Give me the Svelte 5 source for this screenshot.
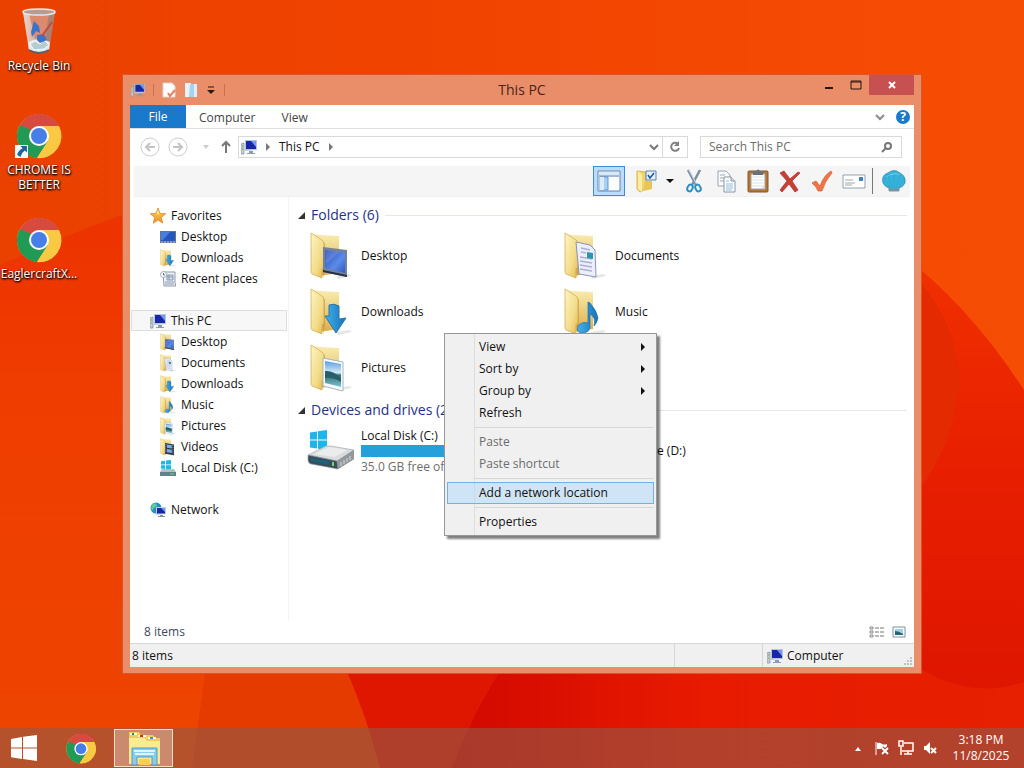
<script lang="ts">
  type TreeRow = { label: string; icon: string; root?: boolean; selected?: boolean };

  const favorites: TreeRow[] = [
    { label: 'Favorites', icon: 'star', root: true },
    { label: 'Desktop', icon: 'screen' },
    { label: 'Downloads', icon: 'folder-downloads' },
    { label: 'Recent places', icon: 'recent' }
  ];
  const computer: TreeRow[] = [
    { label: 'This PC', icon: 'pc', root: true, selected: true },
    { label: 'Desktop', icon: 'folder-desktop' },
    { label: 'Documents', icon: 'folder-documents' },
    { label: 'Downloads', icon: 'folder-downloads' },
    { label: 'Music', icon: 'folder-music' },
    { label: 'Pictures', icon: 'folder-pictures' },
    { label: 'Videos', icon: 'folder-videos' },
    { label: 'Local Disk (C:)', icon: 'disk' }
  ];
  const network: TreeRow[] = [{ label: 'Network', icon: 'network', root: true }];
  const groups = [favorites, computer, network];

  const folders = ['Desktop', 'Documents', 'Downloads', 'Music', 'Pictures', 'Videos'];

  const shortcuts = [
    { label: 'Recycle Bin', icon: 'bin', link: false },
    { label: 'CHROME IS BETTER', icon: 'chrome', link: true },
    { label: 'EaglercraftX...', icon: 'chrome', link: false }
  ];

  const tools = [
    { label: 'Cut', icon: 'cut' },
    { label: 'Copy', icon: 'copy' },
    { label: 'Paste', icon: 'paste' },
    { label: 'Delete', icon: 'delete' },
    { label: 'Rename', icon: 'check' },
    { label: 'Email', icon: 'mail' }
  ];

  const menu = [
    [
      { label: 'View', sub: true },
      { label: 'Sort by', sub: true },
      { label: 'Group by', sub: true },
      { label: 'Refresh' }
    ],
    [
      { label: 'Paste', disabled: true },
      { label: 'Paste shortcut', disabled: true }
    ],
    [{ label: 'Add a network location', active: true }],
    [{ label: 'Properties' }]
  ];

  const diskUsed = 45;
</script>

{#snippet icon(name: string, size: number)}
  <svg class="icon" width={size} height={size} aria-hidden="true"><use href="#{name}" /></svg>
{/snippet}

<svg class="sprite" width="0" height="0" aria-hidden="true">
  <defs>
    <linearGradient id="flap" x1="0" y1="0" x2="1" y2="1">
      <stop offset="0" stop-color="#fdf5c4" />
      <stop offset="0.6" stop-color="#f3dc8a" />
      <stop offset="1" stop-color="#e3b94e" />
    </linearGradient>
    <linearGradient id="back" x1="0" y1="0" x2="0" y2="1">
      <stop offset="0" stop-color="#f8ecae" />
      <stop offset="1" stop-color="#dcae4c" />
    </linearGradient>
    <linearGradient id="blue" x1="0" y1="0" x2="1" y2="1">
      <stop offset="0" stop-color="#2448b8" />
      <stop offset="0.6" stop-color="#5c8ceb" />
      <stop offset="1" stop-color="#2c58c0" />
    </linearGradient>
    <linearGradient id="arrow" x1="0" y1="0" x2="1" y2="0">
      <stop offset="0" stop-color="#45b0ea" />
      <stop offset="1" stop-color="#1272b8" />
    </linearGradient>
    <linearGradient id="photo" x1="0" y1="0" x2="0" y2="1">
      <stop offset="0" stop-color="#5a9be0" />
      <stop offset="0.45" stop-color="#d5ecf5" />
      <stop offset="0.55" stop-color="#33706c" />
      <stop offset="1" stop-color="#7cc4d4" />
    </linearGradient>
    <linearGradient id="metal" x1="0" y1="0" x2="1" y2="0">
      <stop offset="0" stop-color="#d8d8d8" />
      <stop offset="0.5" stop-color="#f4ece8" stop-opacity="0.5" />
      <stop offset="1" stop-color="#8f8f8f" />
    </linearGradient>
    <linearGradient id="gold" x1="0" y1="0" x2="0" y2="1">
      <stop offset="0" stop-color="#ffd85a" />
      <stop offset="1" stop-color="#f08c1a" />
    </linearGradient>
  </defs>

  <symbol id="folder" viewBox="0 0 48 48">
    <path d="M30 44l12-2 3 2-14 3z" fill="#999" opacity="0.25" />
    <path d="M5 2l9 1 18 1v37L12 44z" fill="url(#back)" />
    <path d="M15 8l3 4v26l-2 8z" fill="#b98a35" opacity="0.5" />
    <path d="M4 1l11 7q2 1 2 4v23l-2 2v9L5 42q-1-1-1-3z" fill="url(#flap)" stroke="#cfa84a" stroke-width="0.7" />
  </symbol>
  <symbol id="folder-desktop" viewBox="0 0 48 48">
    <use href="#folder" />
    <path d="M16 15l24 3v27l-24-5z" fill="#72829a" />
    <path d="M18 18l20 3v20l-20-5z" fill="url(#blue)" />
    <path d="M18 18l14 2-13 12z" fill="#fff" opacity="0.15" />
    <path d="M16 38l24 5v2l-24-5z" fill="#25303e" />
  </symbol>
  <symbol id="folder-documents" viewBox="0 0 48 48">
    <use href="#folder" />
    <path d="M15 10l14 3 5 5 1 27-17-3z" fill="#eceefa" stroke="#8c93b4" />
    <path d="M20 16l9 2M20 20l5 1M19 25l12 2M19 29l12 2M19 33l12 2M19 37l12 2" stroke="#a9b1d4" stroke-width="1.3" />
    <path d="M26 20l6 1v6l-6-1z" fill="#2d96aa" />
  </symbol>
  <symbol id="folder-downloads" viewBox="0 0 48 48">
    <use href="#folder" />
    <path d="M22 17q5-2 10 1v13l7-1-10 15-11-17h4z" fill="url(#arrow)" stroke="#2f75a3" />
  </symbol>
  <symbol id="folder-music" viewBox="0 0 48 48">
    <use href="#folder" />
    <path d="M27 14l2 1q7 8 8 15-1 5-4 8 2-9-4-12v14q-1 5-9 5-5-1-3-7 4-5 10-3z" fill="url(#arrow)" stroke="#256caa" stroke-width="0.7" />
  </symbol>
  <symbol id="folder-pictures" viewBox="0 0 48 48">
    <use href="#folder" />
    <path d="M16 14l20 4v29l-20-5z" fill="#f5fbff" stroke="#a7b6c0" />
    <path d="M18 17l16 3v23l-16-4z" fill="url(#photo)" />
    <path d="M18 27q8-1 16 7v4q-8-5-16-4z" fill="#27606a" />
  </symbol>
  <symbol id="folder-videos" viewBox="0 0 48 48">
    <use href="#folder" />
    <path d="M16 13l24 4v29l-24-4z" fill="#2c3543" />
    <path d="M21 17l13 2v9l-13-2zM21 29l13 2v9l-13-2z" fill="#79aeea" />
    <path d="M18 16v25M37 19v24" stroke="#eee" stroke-width="2" stroke-dasharray="2 3" />
  </symbol>

  <symbol id="screen" viewBox="0 0 16 16">
    <path d="M0 2h16v12H0z" fill="#64748d" />
    <path d="M1 3h14v9H1z" fill="#2456bd" />
    <path d="M1 3h9L3 11H1z" fill="#477edb" />
    <path d="M1 13h14" stroke="#a8c7ef" stroke-dasharray="2 1" />
  </symbol>
  <symbol id="star" viewBox="0 0 16 16">
    <path d="M8 0l2 5.4 5.8.3-4.5 3.7 1.5 5.8L8 12l-4.8 3.2 1.5-5.8L.2 5.7 6 5.4z" fill="url(#gold)" stroke="#d88a2a" stroke-width="0.8" />
    <path d="M8 2l1.2 4.3H6.6z" fill="#fff2b0" />
  </symbol>
  <symbol id="recent" viewBox="0 0 16 16">
    <path d="M3 1h12v11l1 3H4z" fill="#f1f3f6" stroke="#8c99aa" />
    <path d="M7 4h6v5H7zM5 11h9M5 13h9M9 4v5M7 6h6" fill="#d5e2ef" stroke="#8499b4" />
    <circle cx="3.5" cy="3.5" r="3" fill="#fff" stroke="#9baabb" />
    <path d="M3.5 2v2H5" fill="none" stroke="#5b6e86" />
  </symbol>
  <symbol id="pc" viewBox="0 0 16 16">
    <path d="M0 5l3-1v11H0z" fill="#c5ced6" stroke="#7f8d99" stroke-width="0.7" />
    <path d="M1 7h1M1 10h1" stroke="#57a457" />
    <path d="M4 1h12v10L4 12z" fill="#b7c5d9" />
    <path d="M5 2h10v8H5z" fill="#1826a8" />
    <path d="M10 2h5v6z" fill="#7697ef" />
    <path d="M8 12h4v2h2v1H6v-1h2z" fill="#8e9bad" />
  </symbol>
  <symbol id="disk" viewBox="0 0 16 16">
    <path d="M1 1.3l4-.6v3.7H1zM6 .6l5-.6v4.4H6zM1 5.3h4V9l-4-.6zM6 5.3h5v4.5L6 9.2z" fill="#1fb8e8" />
    <path d="M2 9h12l2 3H0z" fill="#b3bfc5" />
    <path d="M0 12h16v4H0z" fill="#64818b" />
    <path d="M10 14h4" stroke="#70d35d" />
  </symbol>
  <symbol id="network" viewBox="0 0 16 16">
    <circle cx="6" cy="6" r="5.5" fill="#2193bd" />
    <path d="M3 1q4 0 4 3L4 6 2 9Q0 5 3 1z" fill="#66c79a" />
    <path d="M6 5h10v7l-10 1z" fill="#c0cde0" />
    <path d="M7 6h8v5.5H7z" fill="#1826a8" />
    <path d="M11 6h4v4z" fill="#7697ef" />
    <path d="M10 13h3v1h2v1H8v-1h2z" fill="#8090a8" />
  </symbol>

  <symbol id="drive" viewBox="0 0 48 48">
    <path d="M3 5.5l7-1v8H3zM11 4.3L20 3v9.5h-9zM3 13.5h7v8l-7-1zM11 13.5h9V23l-9-1.3z" fill="#1cb6ea" />
    <path d="M2 29l18-10 27 4v9L31 42 2 36z" fill="#70767a" />
    <path d="M1 28l18-9h5l23 4-17 11z" fill="#d9dcde" stroke="#a5aaad" stroke-width="0.6" />
    <path d="M7 27l15-7 18 3-12 7z" fill="#ebeded" />
    <path d="M30 34l17-11v9L31 42z" fill="#92989c" />
    <path d="M34 35v4m3-6v4m3-6v4m3-6v4" stroke="#dadddd" />
    <path d="M1 28l29 6 1 8-27-5q-3-1-3-4z" fill="#3d4c54" stroke="#91a4ad" stroke-width="0.7" />
    <path d="M4 31l18 3v4L4 34z" fill="#1b627d" />
    <path d="M26 35v4" stroke="#62dd65" stroke-width="2" />
  </symbol>
  <symbol id="disc" viewBox="0 0 48 48">
    <circle cx="24" cy="24" r="20" fill="#dfe4ea" stroke="#98a2ad" />
    <circle cx="24" cy="24" r="5" fill="#fff" stroke="#98a2ad" />
  </symbol>

  <symbol id="chrome" viewBox="0 0 48 48">
    <circle cx="24" cy="25" r="22" fill="#f8c33b" />
    <path d="M24 25L5 14a22 22 0 0 0 17 33l11-17z" fill="#219a55" />
    <path d="M5 14a22 22 0 0 1 39 1H24v10H12z" fill="#d64a40" />
    <path d="M5 14l9 16 10-5-8-6z" fill="#219a55" />
    <path d="M24 15h20a22 22 0 0 1-22 32l11-17z" fill="#fac943" />
    <circle cx="24" cy="25" r="10" fill="#fff" />
    <circle cx="24" cy="25" r="8" fill="#467fe8" />
  </symbol>
  <symbol id="bin" viewBox="0 0 48 48">
    <path d="M8 5l6 38q10 6 20 0l6-38z" fill="#d5a698" opacity="0.72" />
    <path d="M8 5l6 38q5 3 9 3L14 6z" fill="url(#metal)" />
    <path d="M34 7l-6 39q4-1 6-3l6-38z" fill="#777" opacity="0.5" />
    <path d="M13 35q11-6 22 0l-1 8q-10 5-20 0z" fill="#dfeaea" />
    <path d="M15 37l5-3 5 3 4-4 5 5-5 4-10 1z" fill="#b8cbcf" stroke="#f7fcfc" />
    <path d="M19 14l5 5 1 7-4-2-4 6-1-5zM22 28l7-1 3 6-7 3-3-3z" fill="#3973cd" />
    <path d="M27 29l10-14" stroke="#c44b37" stroke-width="2" />
    <ellipse cx="24" cy="5" rx="16" ry="3" fill="#b69b92" stroke="#e9e5e3" stroke-width="1.5" />
    <path d="M14 43q10 6 20 0" fill="none" stroke="#596166" stroke-width="2" />
  </symbol>
  <symbol id="explorer" viewBox="0 0 36 36">
    <path d="M3 2h10l2 3h12l2 3h5v26H3z" fill="#eccb61" />
    <path d="M4 3h7v2H4zM12 5h8v2h-8zM22 7h8v2h-8z" fill="#fff8dd" />
    <path d="M6 3h2v2H6z" fill="#298b42" />
    <path d="M14 5h3v2h-3z" fill="#c93322" />
    <path d="M24 7h3v2h-3z" fill="#3b8fd1" />
    <path d="M3 8h16l2 3h13v23H3z" fill="#f9eb91" />
    <path d="M6 18h25v17h-5v-8H11v8H6z" fill="#8acbea" stroke="#4c9fcb" />
    <path d="M8 21h21M9 24h19" stroke="#d9f5ff" stroke-width="2" />
    <path d="M13 29h11v6H13z" fill="#f6cf54" />
  </symbol>
  <symbol id="windows" viewBox="0 0 26 26">
    <path d="M0 4l11-2v10.5H0zM12 1.8L26 0v12.500H12zM0 13.5h11V24L0 22.300zM12 13.500h14V26l-14-2z" fill="#fff" />
  </symbol>

  <symbol id="panes" viewBox="0 0 24 24">
    <path d="M1 2h22v20H1z" fill="#fff" stroke="#5c84af" />
    <path d="M2 3h20v3H2z" fill="#d7e8f8" />
    <path d="M3 8h8v13H3z" fill="#a8d0f5" stroke="#5b98cf" />
    <path d="M3 8h4v13H3z" fill="#dcecfb" />
    <path d="M2 7h20" stroke="#4373aa" />
  </symbol>
  <symbol id="folder-check" viewBox="0 0 24 24">
    <path d="M3 2l9 1v17l-6 3-3-3z" fill="#f0d66e" stroke="#dcb748" />
    <path d="M4 2l4 4v17l-4-3z" fill="#f9eba8" />
    <path d="M11 12h7v8l-9 2z" fill="#e9c559" />
    <path d="M12 2h10v9H12z" fill="#e3f0fc" stroke="#5583b5" />
    <path d="M14 6l2 3 4-5" fill="none" stroke="#224f9b" stroke-width="1.5" />
  </symbol>
  <symbol id="cut" viewBox="0 0 24 24">
    <path d="M6 1l8 15M18 1L10 16" stroke="#7d8fa0" stroke-width="2.5" />
    <path d="M7 1l8 15" stroke="#d7e1e8" />
    <ellipse cx="8" cy="19" rx="2.500" ry="3.500" transform="rotate(25 8 19)" fill="none" stroke="#2a8fc6" stroke-width="2" />
    <ellipse cx="16" cy="19" rx="2.500" ry="3.500" transform="rotate(-25 16 19)" fill="none" stroke="#2a8fc6" stroke-width="2" />
  </symbol>
  <symbol id="copy" viewBox="0 0 24 24">
    <path d="M4 2h8l4 4v11H4z" fill="#f8fafc" stroke="#9aa5b0" />
    <path d="M6 6h5M6 9h5M6 12h4" stroke="#9aabb9" />
    <path d="M10 8h7l4 4v11H10z" fill="#fff" stroke="#8794a1" />
    <path d="M17 8v4h4" fill="#dae2e9" stroke="#8794a1" />
    <path d="M12 12h3M12 15h7M12 17h7M12 19h7M12 21h6" stroke="#8fbbdb" />
  </symbol>
  <symbol id="paste" viewBox="0 0 24 24">
    <rect x="2" y="2" width="20" height="21" rx="1" fill="#b57536" stroke="#86572b" />
    <path d="M5 5h14v15H5z" fill="#fff" stroke="#a3a3a3" />
    <path d="M6 8h12M6 11h12M6 14h12M6 17h12" stroke="#dce2e6" />
    <path d="M7 2h3q2-3 4 0h3v4H7z" fill="#67717a" />
    <path d="M15 20l4-4v4z" fill="#cbd2d8" />
  </symbol>
  <symbol id="delete" viewBox="0 0 24 24">
    <path d="M2 4l4-2 6 8 8-7 2 1-8 8 6 9-3 2-6-8-7 8-2-2 7-9z" fill="#ca3f34" stroke="#a82d26" stroke-width="0.7" />
  </symbol>
  <symbol id="check" viewBox="0 0 24 24">
    <path d="M2 14l4-2 4 5q4-11 11-15l1 2q-7 8-10 18H8q-2-5-6-8z" fill="#ef7446" stroke="#d55e37" stroke-width="0.7" />
  </symbol>
  <symbol id="mail" viewBox="0 0 24 24">
    <path d="M1 6h22v13H1z" fill="#fff" stroke="#92a2ad" />
    <path d="M3 11h8M3 14h10M3 16h7" stroke="#a1a8ae" />
    <path d="M17 8h4v4h-4z" fill="#3f83c6" />
  </symbol>
  <symbol id="shell" viewBox="0 0 24 24">
    <path d="M1 14Q-1 6 6 4q6-5 12 0 6 3 5 10-2 4-6 5v3H7v-3q-4-1-6-5z" fill="#35b4da" stroke="#327eaa" stroke-width="0.7" />
    <path d="M12 20V3M10 20L6 5M14 20l4-15M8 19L2 9M16 19l6-10" stroke="#2b9ccb" stroke-width="0.5" />
    <path d="M7 19h10v3H7z" fill="#7198a8" />
    <path d="M4 9q6-7 15-3l-5-1-6 1z" fill="#94e0ee" />
  </symbol>
</svg>

<div class="screen">
  <svg class="wallpaper" viewBox="0 0 1024 768" preserveAspectRatio="none" aria-hidden="true">
    <defs>
      <linearGradient id="sky" x1="0" y1="0" x2="1" y2="0">
        <stop offset="0" stop-color="#ea4100" />
        <stop offset="0.4" stop-color="#f04300" />
        <stop offset="1" stop-color="#f64d04" />
      </linearGradient>
      <linearGradient id="wave" x1="0" y1="0" x2="0" y2="1">
        <stop offset="0" stop-color="#ec2f00" />
        <stop offset="0.4" stop-color="#ef3d00" />
        <stop offset="1" stop-color="#ed4500" />
      </linearGradient>
      <linearGradient id="right" x1="0" y1="0" x2="0" y2="1">
        <stop offset="0" stop-color="#f33600" />
        <stop offset="0.45" stop-color="#e82000" />
        <stop offset="1" stop-color="#dc1200" />
      </linearGradient>
      <linearGradient id="floor" x1="0" y1="0" x2="1" y2="0">
        <stop offset="0" stop-color="#d30800" />
        <stop offset="0.45" stop-color="#e81b00" />
        <stop offset="1" stop-color="#e62000" />
      </linearGradient>
    </defs>
    <path d="M0 0h1024v768H0z" fill="url(#sky)" />
    <path d="M0 265Q65 235 125 214L380 150V768H0z" fill="url(#wave)" />
    <path d="M800 200Q930 245 1024 390V768H800z" fill="url(#right)" />
    <path d="M860 240Q955 285 960 385 950 465 900 510z" fill="#e42a00" />
    <path d="M207 660h145l32 108H192z" fill="#e53b00" />
    <path d="M342 660h190l-70 108h-82q-14-55-38-108z" fill="#df1600" />
    <path d="M507 660h400q58 42 117 22v86H452q20-55 55-108z" fill="url(#floor)" />
  </svg>

  <main class="desktop">
    <ul class="shortcuts">
      {#each shortcuts as item}
        <li>
          <button class="shortcut">
            <span class="shortcut-icon">
              {@render icon(item.icon, 48)}
              {#if item.link}
                <svg class="link-badge" viewBox="0 0 12 12" width="13" height="13" aria-hidden="true">
                  <path d="M0 0h12v12H0z" fill="#f4f8fb" />
                  <path d="M5 1h6v6L9 5Q6 7 5 11L2 9q1-4 5-6z" fill="#19679b" />
                </svg>
              {/if}
            </span>
            <span class="shortcut-label">{item.label}</span>
          </button>
        </li>
      {/each}
    </ul>

    <section class="window" aria-label="This PC">
      <header class="titlebar">
        <div class="quick">
          {@render icon('pc', 14)}
          <span class="quick-sep"></span>
          <button aria-label="Properties">
            <svg width="14" height="16" viewBox="0 0 14 16"><path d="M1 1h9l3 3v11H1z" fill="#fff" stroke="#e3d4cd" /><path d="M6 11l2 3 5-6" fill="none" stroke="#e9805c" stroke-width="2" /></svg>
          </button>
          <button aria-label="New folder">
            <svg width="14" height="16" viewBox="0 0 14 16"><path d="M1 1h6v14H1z" fill="#e8f3fb" /><path d="M6 2h7v13H5z" fill="#a9d2f0" /><path d="M10 2h3v13h-3z" fill="#dceefa" /></svg>
          </button>
          <button aria-label="Customize toolbar">
            <svg width="10" height="10" viewBox="0 0 10 10"><path d="M2 2h6" stroke="#2a1a14" /><path d="M1 5h8L5 9z" fill="#2a1a14" /></svg>
          </button>
          <span class="quick-sep"></span>
        </div>
        <h1>This PC</h1>
        <div class="caption">
          <button aria-label="Minimize"><svg width="10" height="10"><path d="M1 8h8" stroke="#2a1510" stroke-width="2" /></svg></button>
          <button aria-label="Maximize"><svg width="12" height="10"><path d="M1 1h10v8H1zM1 2h10" fill="none" stroke="#2a1510" /></svg></button>
          <button class="close" aria-label="Close"><svg width="8" height="8"><path d="M1 1l6 6M7 1L1 7" stroke="#fff" stroke-width="2" /></svg></button>
        </div>
      </header>

      <div class="body">
        <nav class="tabs" aria-label="Ribbon">
          <button class="tab file">File</button>
          <button class="tab">Computer</button>
          <button class="tab">View</button>
          <button class="expand" aria-label="Expand the ribbon"><svg width="10" height="8"><path d="M1 2l4 4 4-4" fill="none" stroke="#8a8a8a" stroke-width="2" /></svg></button>
          <button class="help" aria-label="Help">?</button>
        </nav>

        <div class="address-row">
          <button class="nav" aria-label="Back"><svg width="20" height="20"><circle cx="10" cy="10" r="9" fill="none" stroke="#cdcdcd" /><path d="M15 10H6M10 6l-4 4 4 4" fill="none" stroke="#c4c4c4" stroke-width="2" /></svg></button>
          <button class="nav" aria-label="Forward"><svg width="20" height="20"><circle cx="10" cy="10" r="9" fill="none" stroke="#cdcdcd" /><path d="M5 10h9M10 6l4 4-4 4" fill="none" stroke="#c4c4c4" stroke-width="2" /></svg></button>
          <button class="nav-small" aria-label="Recent locations"><svg width="8" height="4"><path d="M1 0h6L4 4z" fill="#ccc" /></svg></button>
          <button class="nav-small" aria-label="Up"><svg width="12" height="14"><path d="M6 13V2M2 6l4-4 4 4" fill="none" stroke="#777" stroke-width="2" /></svg></button>
          <div class="address">
            {@render icon('pc', 16)}
            <svg width="6" height="8"><path d="M1 0l4 4-4 4z" fill="#777" /></svg>
            <a href="#this-pc">This PC</a>
            <svg width="6" height="8"><path d="M1 0l4 4-4 4z" fill="#777" /></svg>
            <button class="history" aria-label="Previous locations"><svg width="10" height="8"><path d="M1 2l4 4 4-4" fill="none" stroke="#777" stroke-width="2" /></svg></button>
            <button class="refresh" aria-label="Refresh"><svg width="12" height="12"><path d="M9 3a4 4 0 1 0 1 4" fill="none" stroke="#808080" stroke-width="2" /><path d="M10 0v5H5z" fill="#808080" /></svg></button>
          </div>
          <label class="search">
            <input type="text" placeholder="Search This PC" aria-label="Search This PC" />
            <svg width="12" height="12"><circle cx="7" cy="5" r="3" fill="none" stroke="#777" stroke-width="2" /><path d="M5 7l-4 4" stroke="#777" stroke-width="2" /></svg>
          </label>
        </div>

        <div class="toolbar">
          <button class="tool pressed" aria-label="Navigation pane">{@render icon('panes', 24)}</button>
          <button class="tool" aria-label="Folder options">{@render icon('folder-check', 24)}</button>
          <button class="tool narrow" aria-label="More options"><svg width="8" height="4"><path d="M0 0h8L4 4z" fill="#111" /></svg></button>
          {#each tools as tool}
            <button class="tool" aria-label={tool.label}>{@render icon(tool.icon, 24)}</button>
          {/each}
          <span class="tool-sep"></span>
          <button class="tool" aria-label="Classic settings">{@render icon('shell', 24)}</button>
        </div>

        <div class="panes">
          <nav class="tree" aria-label="Folders">
            {#each groups as group}
              <ul>
                {#each group as row}
                  <li>
                    <a href="#{row.icon}" class:root={row.root} class:selected={row.selected}>
                      <span class="tree-icon">{@render icon(row.icon, row.icon.startsWith('folder') ? 18 : 16)}</span>
                      {row.label}
                    </a>
                  </li>
                {/each}
              </ul>
            {/each}
          </nav>

          <div class="files">
            <h2>
              <svg width="7" height="7"><path d="M7 0v7H0z" fill="#333" /></svg>
              Folders (6)
            </h2>
            <div class="tiles">
              {#each folders as name}
                <div class="tile">
                  {@render icon('folder-' + name.toLowerCase(), 48)}
                  <span>{name}</span>
                </div>
              {/each}
            </div>

            <h2>
              <svg width="7" height="7"><path d="M7 0v7H0z" fill="#333" /></svg>
              Devices and drives (2)
            </h2>
            <div class="tiles">
              <div class="tile">
                {@render icon('drive', 48)}
                <div class="drive-info">
                  <span>Local Disk (C:)</span>
                  <div class="usage"><div class="used" style="width: {diskUsed}%"></div></div>
                  <span class="free">35.0 GB free of 60 GB</span>
                </div>
              </div>
              <div class="tile">
                {@render icon('disc', 48)}
                <span>CD Drive (D:)</span>
              </div>
            </div>
          </div>
        </div>

        <div class="details">
          <span>8 items</span>
          <button aria-label="Details view"><svg width="16" height="12"><path d="M1 1h3v2H1zM1 5h3v2H1zM1 9h3v2H1z" fill="none" stroke="#888" /><path d="M6 2h4m1 0h4M6 6h4m1 0h4M6 10h4m1 0h4" stroke="#777" /></svg></button>
          <button aria-label="Large icons view"><svg width="14" height="12"><path d="M1 1h12v10H1z" fill="#fff" stroke="#7593a5" /><path d="M3 3h8v6H3z" fill="#9fd2ea" /><path d="M3 9V5q4 0 8 3v1z" fill="#27656e" /></svg></button>
        </div>

        <footer class="status">
          <span class="count">8 items</span>
          <span class="cell"></span>
          <span class="cell zone">{@render icon('pc', 16)} Computer</span>
          <svg class="grip" width="10" height="10"><path d="M7 2h2M4 5h2m1 0h2M1 8h2m1 0h2m1 0h2" stroke="#c2c2c2" stroke-width="2" /></svg>
        </footer>
      </div>
    </section>

    <div class="menu" role="menu">
      {#each menu as section}
        <div class="menu-section" role="group">
          {#each section as item}
            <button role="menuitem" disabled={item.disabled} class:active={item.active}>
              {item.label}
              {#if item.sub}
                <svg width="4" height="8"><path d="M0 0l4 4-4 4z" fill="#111" /></svg>
              {/if}
            </button>
          {/each}
        </div>
      {/each}
    </div>
  </main>

  <footer class="taskbar">
    <button class="start" aria-label="Start">{@render icon('windows', 26)}</button>
    <button class="task" aria-label="Chrome">{@render icon('chrome', 32)}</button>
    <button class="task open" aria-label="File Explorer">{@render icon('explorer', 36)}</button>
    <div class="tray">
      <button class="overflow" aria-label="Show hidden icons"><svg width="8" height="16"><path d="M1 11h6L4 7z" fill="#fff" /></svg></button>
      <button aria-label="Action Center">
        <svg width="16" height="16"><path d="M2 2v13" stroke="#fff" /><path d="M3 3q3-1 5 1 2 1 5 0v5H3z" fill="#fff" /><path d="M8 8l6 6m0-6l-6 6" stroke="#a83b2c" stroke-width="4" /><path d="M8 8l6 6m0-6l-6 6" stroke="#fff" stroke-width="2" /></svg>
      </button>
      <button aria-label="Network">
        <svg width="16" height="16"><path d="M6 3h9v8H4M10 11v3M6 14h8M3 7v8M1 1h4v5H1z" fill="none" stroke="#fff" stroke-width="1.5" /></svg>
      </button>
      <button aria-label="Volume">
        <svg width="16" height="16"><path d="M2 6h2l4-4v12l-4-4H2z" fill="#fff" /><path d="M9 8l5 5m0-5l-5 5" stroke="#fff" stroke-width="2" /></svg>
      </button>
      <button class="clock"><span>3:18 PM</span><span>11/8/2025</span></button>
    </div>
  </footer>
</div>

<style>
  :global(body) {
    background: #ea4100;
  }

  .screen {
    position: relative;
    display: flex;
    flex-direction: column;
    min-height: 100vh;
    font: 12px/16px 'Open Sans', 'Noto Sans', sans-serif;
    color: #111;
    overflow: hidden;
  }

  .sprite {
    position: absolute;
  }

  .wallpaper {
    position: absolute;
    inset: 0;
    width: 100%;
    height: 100%;
  }

  button {
    display: flex;
    align-items: center;
    justify-content: center;
    padding: 0;
    border: 0;
    background: none;
    font: inherit;
    color: inherit;
  }

  a {
    color: inherit;
    text-decoration: none;
  }

  ul {
    list-style: none;
    margin: 0;
    padding: 0;
  }

  svg {
    flex: none;
  }

  .desktop {
    position: relative;
    flex: 1;
    min-height: 640px;
  }

  .shortcuts {
    width: 78px;
    padding-top: 7px;
  }

  .shortcuts li {
    height: 104px;
  }

  .shortcut {
    flex-direction: column;
    gap: 3px;
    width: 100%;
    color: #fff;
    line-height: 15px;
    text-shadow: 1px 1px 2px #000, 0 1px 2px #000;
  }

  .shortcut-icon {
    position: relative;
    display: flex;
  }

  .link-badge {
    position: absolute;
    left: 0;
    bottom: 1px;
  }

  .window {
    position: absolute;
    inset: 75px 103px 55px 123px;
    display: flex;
    flex-direction: column;
    box-sizing: border-box;
    padding: 0 7px 6px;
    background: #e98e68;
    box-shadow: 0 0 0 1px #d9562c;
  }

  .titlebar {
    display: grid;
    grid-template-columns: 1fr auto 1fr;
    height: 30px;
  }

  .titlebar h1 {
    margin: 0;
    font-size: 14px;
    font-weight: 400;
    line-height: 30px;
    color: #4b2418;
  }

  .quick {
    display: flex;
    align-items: center;
    gap: 8px;
    padding-left: 1px;
  }

  .quick-sep {
    width: 1px;
    height: 12px;
    background: #c9714e;
  }

  .caption {
    display: flex;
    justify-content: flex-end;
  }

  .caption button {
    width: 27px;
    height: 20px;
  }

  .caption .close {
    width: 45px;
    background: #c75050;
  }

  .body {
    flex: 1;
    display: flex;
    flex-direction: column;
    min-height: 0;
    background: #fff;
  }

  .tabs {
    display: flex;
    height: 23px;
    border-bottom: 1px solid #dedfe0;
  }

  .tab {
    padding: 2px 13px 0;
    color: #444;
  }

  .tab.file {
    width: 56px;
    padding: 0;
    background: #1979ca;
    color: #fff;
  }

  .expand {
    margin-left: auto;
    width: 24px;
  }

  .help {
    align-self: center;
    width: 14px;
    height: 14px;
    margin: 0 4px;
    border-radius: 50%;
    background: #1979ca;
    color: #fff;
    font-weight: 700;
    line-height: 14px;
  }

  .address-row {
    display: flex;
    align-items: center;
    box-sizing: border-box;
    height: 37px;
    padding: 0 12px 2px 10px;
  }

  .nav {
    width: 20px;
    margin-right: 8px;
  }

  .nav-small {
    width: 20px;
  }

  .address {
    flex: 1;
    display: flex;
    align-items: center;
    gap: 8px;
    height: 20px;
    margin: 0 12px 0 2px;
    padding-left: 2px;
    border: 1px solid #d9d9d9;
  }

  .history {
    align-self: stretch;
    margin-left: auto;
    width: 16px;
  }

  .refresh {
    align-self: stretch;
    width: 25px;
    margin-left: -8px;
    border-left: 1px solid #d9d9d9;
  }

  .search {
    display: flex;
    align-items: center;
    width: 184px;
    height: 20px;
    padding: 0 8px;
    border: 1px solid #d9d9d9;
  }

  .search input {
    flex: 1;
    min-width: 0;
    padding: 0;
    border: 0;
    outline: 0;
    font: inherit;
  }

  .search input::placeholder {
    color: #6d6d6d;
    opacity: 1;
  }

  .toolbar {
    display: flex;
    justify-content: flex-end;
    height: 30px;
    margin: 0 4px;
    background: #f5f5f5;
    border-bottom: 1px solid #f0f0f0;
  }

  .tool {
    width: 32px;
  }

  .tool.pressed {
    box-sizing: border-box;
    margin-right: 5px;
    border: 1px solid #3c8ad8;
    background: #bcdcfa;
  }

  .tool.narrow {
    width: 16px;
  }

  .tool-sep {
    width: 1px;
    margin: 2px 5px 2px 2px;
    background: #777;
  }

  .panes {
    flex: 1;
    display: flex;
    min-height: 0;
    overflow: hidden;
  }

  .tree {
    flex: none;
    width: 156px;
    padding: 8px 1px;
    border-right: 1px solid #f2f4f6;
  }

  .tree ul {
    margin-bottom: 21px;
  }

  .tree a {
    display: flex;
    align-items: center;
    gap: 5px;
    box-sizing: border-box;
    height: 21px;
    padding-left: 28px;
    border: 1px solid transparent;
    white-space: nowrap;
  }

  .tree a.root {
    padding-left: 18px;
  }

  .tree a.selected {
    background: #f7f7f7;
    border-color: #dedede;
  }

  .tree-icon {
    display: flex;
    justify-content: center;
    width: 16px;
  }

  .files {
    flex: 1;
    min-width: 0;
    padding: 8px 7px 0 9px;
  }

  h2 {
    display: flex;
    align-items: center;
    gap: 6px;
    margin: 0;
    font-size: 14px;
    font-weight: 400;
    line-height: 20px;
    color: #1e3287;
  }

  h2::after {
    content: '';
    flex: 1;
    height: 1px;
    background: #e4e7ec;
  }

  .tiles {
    display: grid;
    grid-template-columns: repeat(auto-fill, 254px);
    grid-auto-rows: 56px;
    padding: 3px 0 4px 9px;
  }

  .tile {
    display: flex;
    align-items: center;
    gap: 6px;
  }

  .drive-info {
    display: flex;
    flex-direction: column;
    width: 190px;
    line-height: 15px;
  }

  .usage {
    height: 12px;
    margin: 2px 0;
    background: #e6e6e6;
  }

  .used {
    height: 100%;
    background: #26a0da;
  }

  .free {
    color: #6d6d6d;
  }

  .details {
    display: flex;
    align-items: center;
    gap: 7px;
    height: 22px;
    padding: 0 8px 0 14px;
    color: #3b4a5c;
  }

  .details span {
    flex: 1;
  }

  .status {
    position: relative;
    display: flex;
    align-items: center;
    height: 23px;
    border-top: 1px solid #d7d7d7;
    background: #f0f0f0;
  }

  .count {
    flex: 1;
    padding-left: 2px;
  }

  .cell {
    display: flex;
    align-items: center;
    gap: 4px;
    align-self: stretch;
    width: 87px;
    border-left: 1px solid #d7d7d7;
  }

  .cell.zone {
    width: 147px;
    padding-left: 4px;
  }

  .grip {
    position: absolute;
    right: 1px;
    bottom: 1px;
  }

  .menu {
    position: absolute;
    left: 444px;
    top: 333px;
    width: 207px;
    padding: 2px;
    border: 1px solid #979797;
    background: linear-gradient(90deg, #f0f0f0 29px, #dedede 29px, #dedede 30px, #f0f0f0 30px);
    box-shadow: 3px 3px 2px rgba(0, 0, 0, 0.5);
  }

  .menu-section + .menu-section::before {
    content: '';
    display: block;
    height: 1px;
    margin: 3px 0 3px 28px;
    background: #d7d7d7;
  }

  .menu button {
    justify-content: space-between;
    box-sizing: border-box;
    width: 100%;
    height: 22px;
    padding: 0 8px 0 31px;
    border: 1px solid transparent;
  }

  .menu button:disabled {
    color: #6d6d6d;
  }

  .menu button.active {
    border-color: #78aee5;
    background: rgba(174, 215, 247, 0.5);
  }

  .taskbar {
    position: relative;
    display: flex;
    height: 40px;
    background: rgba(143, 90, 72, 0.6);
    color: #fff;
  }

  .start {
    width: 48px;
  }

  .task {
    width: 66px;
  }

  .task.open {
    box-sizing: border-box;
    width: 59px;
    margin: 1px 0;
    border: 1px solid #f5dccb;
    background: rgba(220, 185, 165, 0.55);
  }

  .tray {
    display: flex;
    align-items: center;
    gap: 8px;
    margin-left: auto;
    padding-right: 12px;
  }

  .overflow {
    width: 16px;
  }

  .clock {
    flex-direction: column;
    width: 62px;
    margin-left: 4px;
  }
</style>
